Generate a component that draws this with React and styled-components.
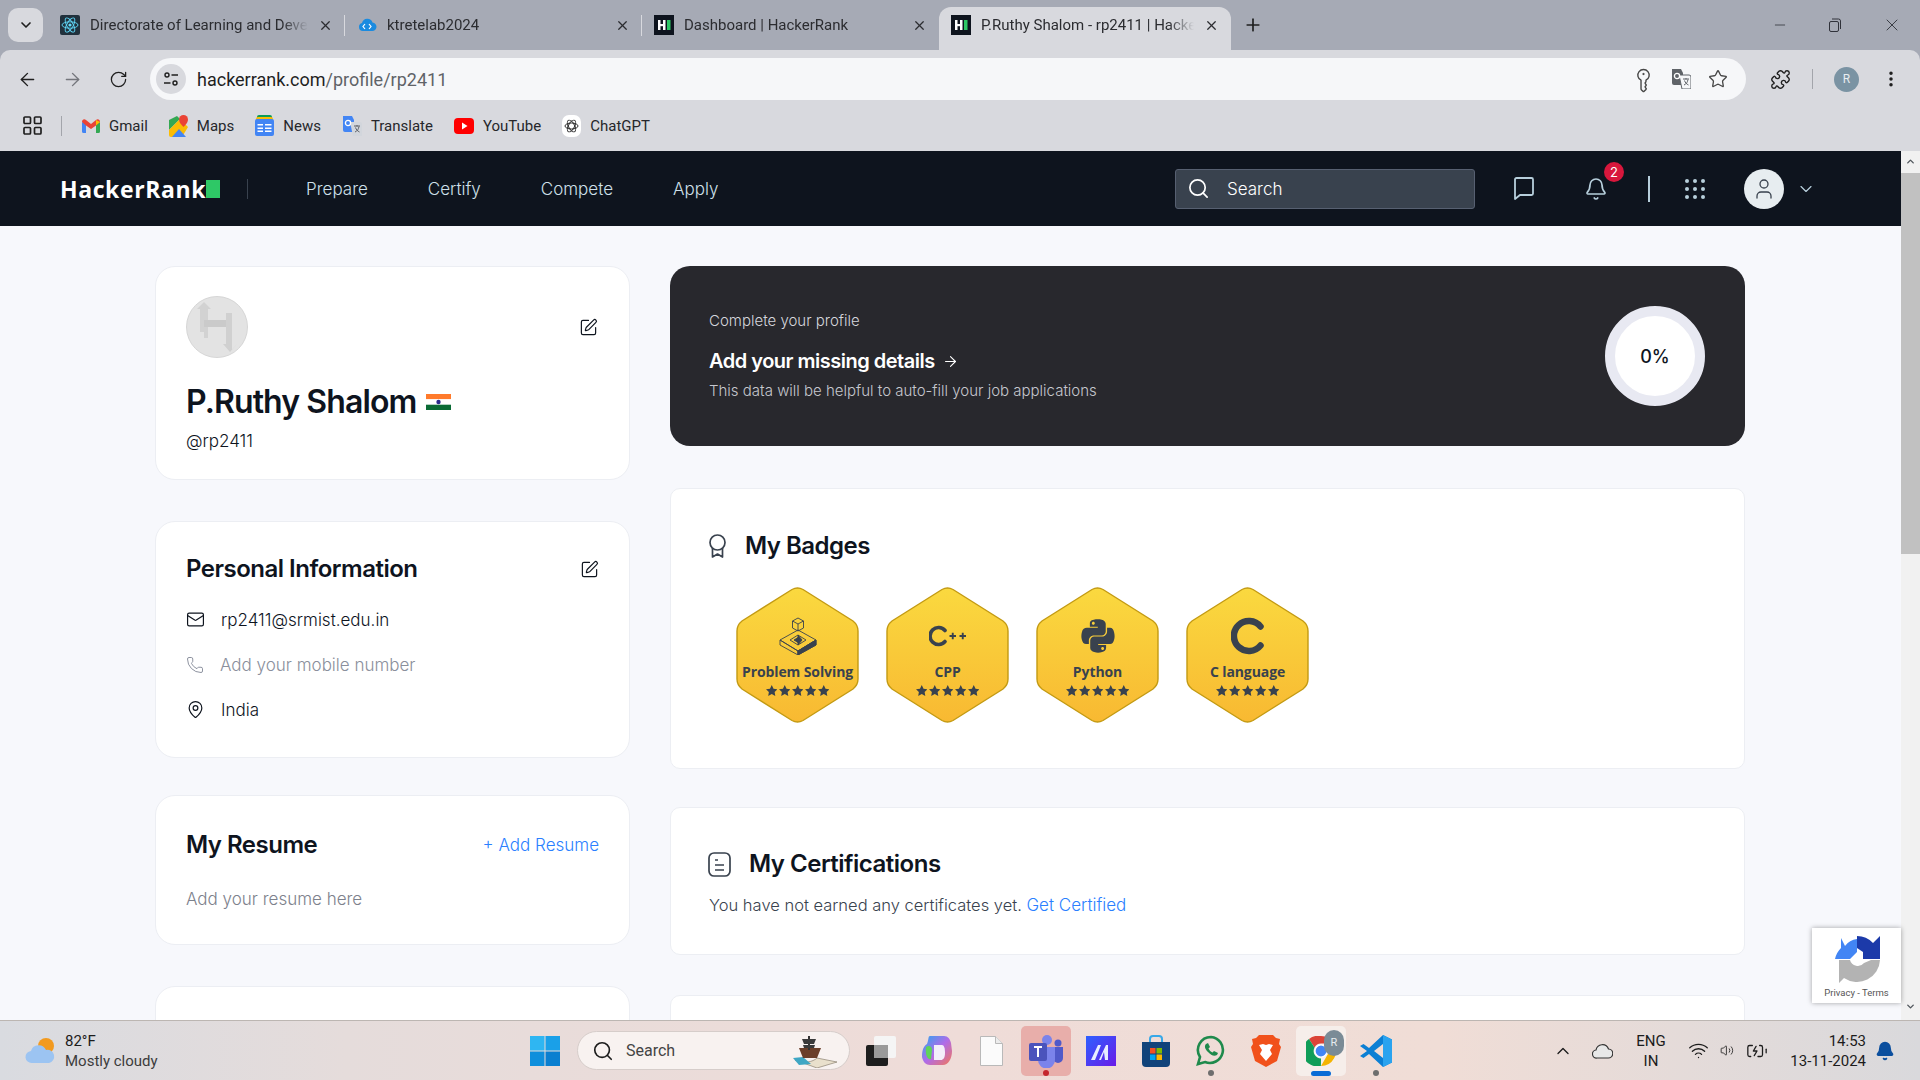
import styled, { createGlobalStyle } from "styled-components";
import {
  ArrowLeft, ArrowRight, RotateCw, KeyRound, Star, Puzzle, EllipsisVertical, Plus, X, Minus,
  ChevronDown, ChevronUp, Search, Bell, User, SquarePen, Mail, Phone, MapPin, Wifi, Volume2, BatteryCharging,
} from "lucide-react";
import { FaPython } from "react-icons/fa";

const GlobalStyle = createGlobalStyle`
  html, body { margin: 0; padding: 0; height: 100%; overflow: hidden; }
  body { font-family: "Inter", "Liberation Sans", sans-serif; background: #f7f8fc; }
  * { box-sizing: border-box; }
`;

const Screen = styled.div`
  width: 1920px;
  height: 1080px;
  display: flex;
  flex-direction: column;
  overflow: hidden;
  position: relative;
`;

/* browser chrome */
const Frame = styled.div`
  background: #a6aab5;
  flex: none;
  font-family: "Roboto", "Liberation Sans", sans-serif;
`;

const TabStrip = styled.div`
  height: 50px;
  display: flex;
  align-items: flex-end;
  padding-left: 8px;
`;

const TabMenu = styled.div`
  width: 35px;
  height: 34px;
  margin: 0 5px 8px 0;
  border-radius: 10px;
  background: #d8d9de;
  display: flex;
  align-items: center;
  justify-content: center;
  color: #1f1f1f;
`;

const Tab = styled.div`
  position: relative;
  width: ${(p) => (p.$active ? "292px" : "297px")};
  height: 43px;
  padding: 0 12px 7px;
  display: flex;
  align-items: center;
  gap: 10px;
  border-radius: 12px 12px 0 0;
  background: ${(p) => (p.$active ? "#d8d9de" : "transparent")};
  color: #2b2c30;
  &::after {
    content: "";
    display: ${(p) => (p.$divider ? "block" : "none")};
    position: absolute;
    right: 0;
    top: 8px;
    height: 21px;
    width: 1.5px;
    background: #d8d9de;
  }
`;

const TabTitle = styled.span`
  flex: 1;
  min-width: 0;
  font-size: 15px;
  white-space: nowrap;
  overflow: hidden;
  -webkit-mask-image: linear-gradient(to right, #000 88%, transparent);
  mask-image: linear-gradient(to right, #000 88%, transparent);
`;

const NewTab = styled.div`
  margin: 0 0 8px 12px;
  height: 34px;
  display: flex;
  align-items: center;
  color: #1f1f1f;
`;

const WindowControls = styled.div`
  margin-left: auto;
  height: 50px;
  display: flex;
  align-items: center;
  padding-right: 18px;
  gap: 39px;
  color: #30323a;
`;

const Toolbar = styled.div`
  height: 50px;
  background: #d8d9de;
  border-radius: 10px 10px 0 0;
  display: flex;
  align-items: center;
  padding: 8px 0 0 16px;
  color: #1f1f1f;
`;

const ToolIcon = styled.div`
  width: 22px;
  display: flex;
  justify-content: center;
  margin-right: ${(p) => p.$mr || 0}px;
  margin-left: ${(p) => p.$ml || 0}px;
  color: ${(p) => p.$color || "inherit"};
`;

const Omnibox = styled.div`
  width: 1596px;
  height: 42px;
  border-radius: 21px;
  background: #f6f7f9;
  display: flex;
  align-items: center;
  padding: 0 18px 0 6px;
`;

const SiteChip = styled.div`
  width: 30px;
  height: 30px;
  border-radius: 50%;
  background: #d8d9de;
  display: flex;
  align-items: center;
  justify-content: center;
  margin-right: 11px;
`;

const Url = styled.div`
  font-size: 18px;
  color: #1f1f1f;
  flex: 1;
  span { color: #5f6368; }
`;

const OmniIcons = styled.div`
  display: flex;
  align-items: center;
  gap: 17px;
  color: #474747;
`;

const Avatar = styled.div`
  width: 25px;
  height: 25px;
  border-radius: 50%;
  background: #7a93a3;
  color: #e8edf0;
  font-size: 12px;
  display: flex;
  align-items: center;
  justify-content: center;
`;

const VRule = styled.div`
  width: 1px;
  height: 20px;
  background: #a3a5ab;
  margin: 0 ${(p) => p.$mx || 0}px;
`;

const Bookmarks = styled.div`
  height: 51px;
  background: #d8d9de;
  display: flex;
  align-items: center;
  padding-left: 23px;
`;

const Bookmark = styled.div`
  display: flex;
  align-items: center;
  gap: 9px;
  font-size: 15px;
  color: #26272b;
  margin-left: ${(p) => p.$ml || 21}px;
`;

/* page */
const Viewport = styled.div`
  flex: 1;
  min-height: 0;
  display: flex;
  position: relative;
`;

const Page = styled.div`
  flex: 1;
  min-width: 0;
  overflow: hidden;
  background: #f7f8fc;
`;

const Scrollbar = styled.div`
  width: 19px;
  background: #f1f1f1;
  display: flex;
  flex-direction: column;
  align-items: center;
  padding-top: 5px;
  color: #50565c;
  position: relative;
`;

const ScrollThumb = styled.div`
  width: 19px;
  height: 381px;
  margin-top: 6px;
  background: #c1c1c1;
`;

const ScrollDown = styled.div`
  margin-top: auto;
  margin-bottom: 4px;
`;

const Nav = styled.nav`
  height: 75px;
  background: #0e141e;
  display: flex;
  align-items: center;
  padding-left: 60px;
`;

const Logo = styled.div`
  display: flex;
  align-items: center;
  font-family: "Open Sans", "Noto Sans", sans-serif;
  font-weight: 700;
  font-size: 23px;
  color: #fff;
  letter-spacing: 0.6px;
  i {
    display: block;
    width: 14px;
    height: 18px;
    background: #2ec866;
    margin-left: 0;
  }
`;

const NavRule = styled.div`
  width: ${(p) => p.$w || 1}px;
  height: ${(p) => p.$h || 20}px;
  background: ${(p) => p.$color || "#39424e"};
  margin-left: ${(p) => p.$ml}px;
`;

const NavLinks = styled.div`
  display: flex;
  gap: 60px;
  margin-left: 58px;
`;

const NavLink = styled.a`
  font-size: 17px;
  font-weight: 300;
  color: #cfe0ea;
`;

const NavSearch = styled.div`
  width: 300px;
  height: 40px;
  margin-left: auto;
  background: #39424e;
  border: 1px solid #576071;
  border-radius: 3px;
  display: flex;
  align-items: center;
  padding-left: 11px;
  gap: 17px;
  color: #fff;
  font-size: 17px;
  font-weight: 300;
`;

const NavIcon = styled.div`
  position: relative;
  width: ${(p) => p.$w || 24}px;
  display: flex;
  justify-content: center;
  margin-left: ${(p) => p.$ml}px;
  color: #b7cfdc;
`;

const NotifBadge = styled.span`
  position: absolute;
  top: -15px;
  right: -16px;
  width: 20px;
  height: 20px;
  border-radius: 50%;
  background: #d8173c;
  color: #fff;
  font-size: 13px;
  display: flex;
  align-items: center;
  justify-content: center;
`;

const UserCircle = styled.div`
  width: 40px;
  height: 40px;
  border-radius: 50%;
  background: #e7edf0;
  color: #39424e;
  display: flex;
  align-items: center;
  justify-content: center;
  margin-left: 37px;
`;

const Columns = styled.main`
  display: grid;
  grid-template-columns: 475px 1075px;
  column-gap: 40px;
  padding: 40px 0 0 155px;
`;

const Column = styled.div`
  display: flex;
  flex-direction: column;
`;

const Card = styled.section`
  background: #fff;
  border: 1px solid #eceef3;
  border-radius: ${(p) => p.$radius || 20}px;
  height: ${(p) => p.$h}px;
  margin-top: ${(p) => p.$mt || 0}px;
  padding: ${(p) => p.$pad || "0 30px"};
  flex: none;
`;

const ProfileTop = styled.div`
  display: flex;
  align-items: center;
  justify-content: space-between;
  padding-right: 1px;
`;

const Name = styled.h1`
  margin: 23px 0 0;
  display: flex;
  align-items: center;
  gap: 10px;
  font-size: 32px;
  line-height: 42px;
  font-weight: 600;
  letter-spacing: -0.9px;
  color: #0e141e;
`;

const Handle = styled.div`
  margin-top: 6px;
  font-size: 17px;
  line-height: 24px;
  font-weight: 300;
  color: #0e141e;
`;

const CardHead = styled.div`
  display: flex;
  align-items: center;
  justify-content: space-between;
  height: ${(p) => p.$h || 30}px;
`;

const CardTitle = styled.h2`
  margin: 0;
  font-size: ${(p) => p.$size || 24}px;
  line-height: 30px;
  font-weight: 600;
  letter-spacing: -0.5px;
  color: #0e141e;
`;

const InfoRow = styled.div`
  display: flex;
  align-items: center;
  gap: 16px;
  height: 45px;
  font-size: 17px;
  font-weight: 300;
  color: ${(p) => (p.$muted ? "#8a8f9c" : "#0e141e")};
`;

const LinkText = styled.a`
  font-size: 17px;
  font-weight: 300;
  color: #2b7fff;
`;

const Muted = styled.div`
  font-size: 17px;
  font-weight: 300;
  color: #7d818c;
  margin-top: 29px;
`;

const Hero = styled.section`
  height: 180px;
  background: #28282d;
  border-radius: 20px;
  padding: 0 40px 0 39px;
  display: flex;
  align-items: center;
  justify-content: space-between;
`;

const HeroKicker = styled.div`
  font-size: 15px;
  font-weight: 300;
  line-height: 20px;
  color: #d5d6dc;
`;

const HeroTitle = styled.div`
  margin-top: 16px;
  display: flex;
  align-items: center;
  gap: 7px;
  font-size: 20px;
  line-height: 28px;
  font-weight: 600;
  letter-spacing: -0.5px;
  color: #fff;
`;

const HeroText = styled.div`
  margin-top: 6px;
  font-size: 15px;
  font-weight: 300;
  line-height: 20px;
  color: #c6c7ce;
`;

const Ring = styled.div`
  width: 100px;
  height: 100px;
  border-radius: 50%;
  background: #fff;
  border: 10px solid #e8e9f2;
  display: flex;
  align-items: center;
  justify-content: center;
  font-size: 18px;
  font-weight: 500;
  color: #0e141e;
`;

const SectionHead = styled.div`
  display: flex;
  align-items: center;
  gap: 18px;
  height: 30px;
`;

const BadgeRow = styled.div`
  display: flex;
  gap: 27px;
  margin: 26px 0 0 28px;
`;

const Badge = styled.div`
  position: relative;
  width: 123px;
  height: 136px;
  display: flex;
  flex-direction: column;
  align-items: center;
  color: #39424e;
`;

const BadgeShape = styled.svg`
  position: absolute;
  inset: 0;
`;

const BadgeIcon = styled.div`
  position: relative;
  height: 38px;
  margin-top: 30px;
  display: flex;
  align-items: center;
  justify-content: center;
`;

const BadgeLabel = styled.div`
  position: relative;
  margin-top: 7px;
  font-family: "Open Sans", "Noto Sans", sans-serif;
  font-size: 14px;
  line-height: 20px;
  font-weight: 700;
  white-space: nowrap;
  letter-spacing: -0.1px;
`;

const Stars = styled.div`
  position: relative;
  margin-top: 3px;
  display: flex;
  gap: 1.5px;
`;

const CertText = styled.p`
  margin: 14px 0 0 1px;
  font-size: 16.5px;
  font-weight: 300;
  color: #39424e;
  line-height: 24px;
`;

const Recaptcha = styled.div`
  position: absolute;
  right: 19px;
  bottom: 17px;
  width: 89px;
  height: 75px;
  background: #fff;
  box-shadow: 0 0 5px rgba(0, 0, 0, 0.35);
  display: flex;
  flex-direction: column;
  align-items: center;
  padding-top: 8px;
  font-family: "Roboto", sans-serif;
  font-size: 9.5px;
  color: #555;
  gap: 4px;
`;

/* taskbar */
const Taskbar = styled.footer`
  height: 60px;
  flex: none;
  border-top: 1px solid #bcb6b2;
  background: linear-gradient(90deg, #d9dbe0 0%, #e5dcdb 18%, #efdcd8 50%, #f0ddd6 75%, #d9d9dc 100%);
  display: flex;
  align-items: center;
  padding: 0 16px 0 25px;
  font-family: "Roboto", "Liberation Sans", sans-serif;
  color: #1c1c1c;
`;

const Weather = styled.div`
  width: 505px;
  display: flex;
  align-items: center;
  gap: 9px;
  font-size: 15px;
  line-height: 20px;
  small { display: block; font-size: 15px; color: #3c3c3c; }
`;

const TaskSearch = styled.div`
  width: 273px;
  height: 39px;
  margin: 0 6px 0 17px;
  border-radius: 20px;
  background: #f8f2f0;
  border: 1px solid #d6cdca;
  display: flex;
  align-items: center;
  padding: 0 8px 0 14px;
  gap: 12px;
  font-size: 16px;
  color: #444;
  svg:last-child { margin-left: auto; }
`;

const TaskIcons = styled.div`
  display: flex;
  gap: 5px;
`;

const TaskSlot = styled.div`
  position: relative;
  width: 50px;
  height: 50px;
  border-radius: 5px;
  background: ${(p) => p.$bg || "transparent"};
  display: flex;
  align-items: center;
  justify-content: center;
`;

const RunDot = styled.span`
  position: absolute;
  bottom: 0;
  left: 50%;
  transform: translateX(-50%);
  width: ${(p) => p.$w || 6}px;
  height: ${(p) => (p.$w ? 5 : 6)}px;
  border-radius: 3px;
  background: ${(p) => p.$color};
`;

const Tray = styled.div`
  margin-left: auto;
  display: flex;
  align-items: center;
`;

const TrayItem = styled.div`
  width: ${(p) => p.$w}px;
  display: flex;
  justify-content: ${(p) => p.$justify || "center"};
  text-align: ${(p) => p.$align || "center"};
  font-size: 15px;
  line-height: 20px;
`;

const iconProps = { strokeWidth: 1.6 };

const HrFavicon = () => (
  <svg width="20" height="20" viewBox="0 0 20 20">
    <rect width="20" height="20" fill="#0e141e" />
    <rect x="4" y="5" width="2.5" height="10" fill="#fff" />
    <rect x="9" y="5" width="2.5" height="10" fill="#fff" />
    <rect x="6" y="9" width="4" height="2.2" fill="#fff" />
    <rect x="13" y="5" width="3.5" height="10" fill="#2ec866" />
  </svg>
);

const ReactFavicon = () => (
  <svg width="20" height="20" viewBox="0 0 20 20">
    <rect width="20" height="20" rx="2" fill="#20303c" />
    <g fill="none" stroke="#61dafb" strokeWidth="0.9">
      <ellipse cx="10" cy="10" rx="8" ry="3.2" />
      <ellipse cx="10" cy="10" rx="8" ry="3.2" transform="rotate(60 10 10)" />
      <ellipse cx="10" cy="10" rx="8" ry="3.2" transform="rotate(120 10 10)" />
    </g>
    <circle cx="10" cy="10" r="1.6" fill="#61dafb" />
  </svg>
);

const CodeFavicon = () => (
  <svg width="20" height="20" viewBox="0 0 20 20">
    <path d="M2 12a4 4 0 0 1 3-4 5.500 5.500 0 0 1 10.500-.5A4 4 0 0 1 15 16H6a4 4 0 0 1-4-4z" fill="#1a8be0" />
    <path d="M8 9l-2 2.500L8 14M12 9l2 2.500-2 2.500" fill="none" stroke="#fff" strokeWidth="1.200" />
  </svg>
);

const GmailIcon = () => (
  <svg width="18" height="14" viewBox="0 0 18 14">
    <path d="M0 3v9.500A1.500 1.500 0 0 0 1.500 14H4V5z" fill="#4285f4" />
    <path d="M14 14h2.500a1.500 1.500 0 0 0 1.500-1.500V3l-4 2z" fill="#34a853" />
    <path d="M0 3c0-2.500 2.300-3.500 4-2l5 4 5-4c1.700-1.500 4-.5 4 2l-4 3.500L9 10 4 6.500z" fill="#ea4335" />
    <path d="M14 1l4 2-4 3.500z" fill="#fbbc04" />
  </svg>
);

const MapsIcon = () => (
  <svg width="19" height="22" viewBox="0 0 19 22">
    <path d="M0 5l8-4 3 3L0 15z" fill="#34a853" />
    <path d="M0 15L11 4l8 8-6 10H2a2 2 0 0 1-2-2z" fill="#fbbc04" />
    <path d="M3 22l7-8 7 8z" fill="#4285f4" />
    <path d="M14.500 0a4.500 4.500 0 0 1 4.500 4.500C19 8 14.500 12 14.500 12S10 8 10 4.500A4.500 4.500 0 0 1 14.500 0z" fill="#ea4335" />
  </svg>
);

const NewsIcon = () => (
  <svg width="19" height="21" viewBox="0 0 19 21">
    <rect x="2" y="0" width="15" height="8" rx="2" fill="#0c9d58" />
    <rect x="1" y="2" width="17" height="6" rx="2" fill="#fbbc04" />
    <rect y="4" width="19" height="17" rx="2" fill="#4285f4" />
    <rect x="2.500" y="9" width="5.500" height="1.500" fill="#fff" />
    <rect x="2.500" y="12.500" width="5.500" height="1.500" fill="#fff" />
    <rect x="2.500" y="15.500" width="5.500" height="1.500" fill="#fff" />
    <rect x="10" y="9" width="6.500" height="1.500" fill="#fff" />
    <rect x="10" y="12.500" width="6.500" height="1.500" fill="#fff" />
    <rect x="10" y="15.500" width="6.500" height="1.500" fill="#fff" />
  </svg>
);

const TranslateIcon = ({ dark }) => (
  <svg width="20" height="20" viewBox="0 0 20 20">
    <path d="M1 0h9l2 4v12H3a2 2 0 0 1-2-2z" fill={dark ? "#5f6368" : "#4285f4"} />
    <path d="M8 6h10a2 2 0 0 1 2 2v12h-9z" fill={dark ? "#f6f7f9" : "#d2d6dc"} stroke={dark ? "#5f6368" : "none"} />
    <circle cx="6" cy="7" r="2.600" fill="none" stroke="#fff" strokeWidth="1.300" />
    <path d="M12 10h6M15 9v1.500M13 16c2.500-1 3.500-3 4-5.500M13.500 11.500c.6 2 2 3.500 4 4.500" fill="none" stroke="#5f6368" strokeWidth="1" />
  </svg>
);

const YoutubeIcon = () => (
  <svg width="20" height="16" viewBox="0 0 20 16">
    <rect width="20" height="16" rx="4" fill="#ff0000" />
    <path d="M8 4.500l5.500 3.500L8 11.500z" fill="#fff" />
  </svg>
);

const ChatGptIcon = () => (
  <svg width="19" height="22" viewBox="0 0 19 22">
    <rect width="19" height="22" rx="7" fill="#fff" />
    <g fill="none" stroke="#303030" strokeWidth="1">
      <ellipse cx="9.500" cy="11" rx="6.500" ry="3" />
      <ellipse cx="9.500" cy="11" rx="6.500" ry="3" transform="rotate(60 9.500 11)" />
      <ellipse cx="9.500" cy="11" rx="6.500" ry="3" transform="rotate(120 9.500 11)" />
    </g>
  </svg>
);

const StarGlyph = () => (
  <svg width="11.500" height="11" viewBox="0 0 24 23">
    <path d="M12 0l3.700 7.600 8.300 1.200-6 5.900 1.400 8.300L12 19l-7.400 4 1.400-8.300-6-5.900 8.300-1.200z" fill="#39424e" />
  </svg>
);

const ProblemIcon = () => (
  <svg width="38" height="38" viewBox="0 0 38 38" fill="none" stroke="#39424e" strokeWidth="0.9">
    <path d="M19 1l5.500 3v7L19 14l-5.500-3V4z" />
    <path d="M13.500 4L19 7l5.500-3M19 7v7" />
    <path d="M1 23l18-10 18 10-18 11z" />
    <path d="M1 23v5l18 10v-4zM19 38l18-10v-5l-18 11z" />
    <path d="M37 23v5l-18 10V34z" fill="#39424e" />
    <path d="M11 23l8-5 8 5-8 5z" />
    <path d="M19 18l4 5-4 5z" fill="#39424e" />
    <path d="M15 23l4-2.500V25.500z" fill="#39424e" />
  </svg>
);

const CppIcon = () => (
  <svg width="38" height="24" viewBox="0 0 38 24" fill="none" stroke="#39424e">
    <path d="M16 6.500A8.500 8.500 0 1 0 16 17.500" strokeWidth="3.600" strokeLinecap="round" />
    <path d="M20.500 12h6.500M23.750 8.700v6.600M30.500 12h6.500M33.750 8.700v6.600" strokeWidth="1.900" />
  </svg>
);

const CIcon = () => (
  <svg width="34" height="38" viewBox="0 0 34 38" fill="none" stroke="#39424e">
    <path d="M29.500 9.500A15 15 0 1 0 29.500 28.500" strokeWidth="6.500" strokeLinecap="round" />
  </svg>
);

const BadgeOutline = () => (
  <BadgeShape width="123" height="136" viewBox="0 0 123 136">
    <defs>
      <linearGradient id="hex" x1="0" y1="0" x2="0" y2="1">
        <stop offset="0" stopColor="#fad93f" />
        <stop offset="1" stopColor="#f8b932" />
      </linearGradient>
    </defs>
    <path
      d="M56 2.500Q61.500 -0.500 67 2.500L117 34Q122 38 122 44L122 92Q122 98 117 102L67 133.500Q61.500 136.500 56 133.500L6 102Q1 98 1 92L1 44Q1 38 6 34Z"
      fill="url(#hex)"
      stroke="#c39a12"
      strokeWidth="1.400"
    />
  </BadgeShape>
);

const badges = [
  { label: "Problem Solving", icon: <ProblemIcon /> },
  { label: "CPP", icon: <CppIcon /> },
  { label: "Python", icon: <FaPython size={38} color="#39424e" /> },
  { label: "C language", icon: <CIcon /> },
];

const RecaptchaLogo = () => (
  <svg width="46" height="47" viewBox="0 0 46 47">
    <path d="M7 2l4 8a17 17 0 0 1 12-7v13l-7 7H1A22 22 0 0 1 7 12z" fill="#4285f4" />
    <path d="M23 0v12l6 4v7h17V0l-7 7a22 22 0 0 0-16-7z" fill="#1c3aa9" />
    <path d="M1 24h15a8 8 0 0 0 14 3l7 -3h9a23 23 0 0 1-36 18l-5 5V24z" fill="#b3b3b3" />
  </svg>
);

const WindowsIcon = () => (
  <svg width="30" height="30" viewBox="0 0 30 30">
    <rect width="14.500" height="14.500" fill="#2fb6f2" />
    <rect x="15.500" width="14.500" height="14.500" fill="#1aa0e8" />
    <rect y="15.500" width="14.500" height="14.500" fill="#0f8fdc" />
    <rect x="15.500" y="15.500" width="14.500" height="14.500" fill="#0a7fd0" />
  </svg>
);

const WeatherIcon = () => (
  <svg width="31" height="31" viewBox="0 0 31 31">
    <circle cx="21" cy="11" r="8" fill="#f29a1f" />
    <path d="M7 28a6 6 0 0 1-1-12 8 8 0 0 1 15-1 6.500 6.500 0 0 1 3 13z" fill="#9cc4f2" />
  </svg>
);

const ShipIcon = () => (
  <svg width="52" height="34" viewBox="0 0 52 34">
    <path d="M6 26c8 4 18 2 22-2l20 4-20 6z" fill="#e9e0cc" stroke="#7a7060" strokeWidth="0.6" />
    <path d="M4 24l10-1 8 7-12 1z" fill="#3fa7c4" />
    <path d="M10 14h22l-4 10H14z" fill="#6b3f2a" />
    <rect x="19" y="2" width="2" height="14" fill="#333" />
    <path d="M13 5h14l-2 5H15zM14 11h12l-1 3H15z" fill="#3a3a3a" />
  </svg>
);

const TaskViewIcon = () => (
  <svg width="30" height="30" viewBox="0 0 30 30">
    <rect x="8" y="0" width="22" height="22" rx="2" fill="#f5f5f5" />
    <rect x="0" y="9" width="22" height="21" rx="2" fill="#1e1e1e" />
    <rect x="8" y="9" width="14" height="13" fill="#9a9a9a" />
  </svg>
);

const CopilotIcon = () => (
  <svg width="31" height="31" viewBox="0 0 31 31">
    <defs>
      <linearGradient id="cop" x1="0" y1="0" x2="1" y2="1">
        <stop offset="0" stopColor="#2aa7f0" />
        <stop offset="0.5" stopColor="#b06be8" />
        <stop offset="1" stopColor="#f2785a" />
      </linearGradient>
    </defs>
    <path d="M9 1h14c4 0 6 3 7 7l1 8c0 8-4 14-9 14H9c-4 0-7-3-8-8 0-8 2-11 5-13 2-5 1-8 3-8z" fill="url(#cop)" />
    <path d="M5 12c3-2 6-1 6 3l-1 9c-3 1-6-3-5-12z" fill="#5fd35a" />
    <path d="M13 10h8c2 0 3 3 3 8s-2 7-4 7h-7z" fill="#f4eefa" />
  </svg>
);

const FileIcon = () => (
  <svg width="23" height="30" viewBox="0 0 23 30">
    <path d="M.5.500h15l7 7v22H.5z" fill="#fbfbfb" stroke="#b9b9b9" />
    <path d="M15.500.500v7h7" fill="#ececec" stroke="#b9b9b9" />
  </svg>
);

const TeamsIcon = () => (
  <svg width="34" height="34" viewBox="0 0 34 34">
    <circle cx="18" cy="6" r="5" fill="#7b83eb" />
    <circle cx="29" cy="9" r="3.500" fill="#5059c9" />
    <path d="M23 13h11v11a5 5 0 0 1-10 0z" fill="#5059c9" />
    <path d="M9 13h17v13a8 8 0 0 1-17 0z" fill="#7b83eb" />
    <rect x="0" y="9" width="18" height="18" rx="2" fill="#4b53bc" />
    <path d="M5 13h8M9 13v10" stroke="#fff" strokeWidth="2" />
  </svg>
);

const AltIcon = () => (
  <svg width="30" height="30" viewBox="0 0 30 30">
    <defs>
      <linearGradient id="alt" x1="0" y1="0" x2="1" y2="1">
        <stop offset="0" stopColor="#2d60ff" />
        <stop offset="1" stopColor="#6a1be8" />
      </linearGradient>
    </defs>
    <rect width="30" height="30" fill="url(#alt)" />
    <path d="M5 24l7-15h3L9 24zM13 24l7-15h2v15h-3l-1-8-3 8z" fill="#e8eeff" />
  </svg>
);

const StoreIcon = () => (
  <svg width="30" height="32" viewBox="0 0 30 32">
    <path d="M9 8V4a3 3 0 0 1 3-3h6a3 3 0 0 1 3 3v4" fill="none" stroke="#38a8e8" strokeWidth="2" />
    <path d="M1 7h28v21a4 4 0 0 1-4 4H5a4 4 0 0 1-4-4z" fill="#11437a" />
    <rect x="9" y="13" width="5.500" height="5.500" fill="#f25022" />
    <rect x="15.500" y="13" width="5.500" height="5.500" fill="#7fba00" />
    <rect x="9" y="19.500" width="5.500" height="5.500" fill="#00a4ef" />
    <rect x="15.500" y="19.500" width="5.500" height="5.500" fill="#ffb900" />
  </svg>
);

const WhatsappIcon = () => (
  <svg width="30" height="31" viewBox="0 0 30 31">
    <path d="M15 2a13 13 0 0 0-11 20l-2 7 7-2A13 13 0 1 0 15 2z" fill="none" stroke="#1f8a4c" strokeWidth="2.600" />
    <path d="M10 9c-2 2-1 5 2 8s6 5 9 3l1-2-4-2-1.500 1.500c-2-1-3-2-4-4L14 12l-2-4z" fill="#1f8a4c" />
  </svg>
);

const BraveIcon = () => (
  <svg width="30" height="33" viewBox="0 0 30 33">
    <path d="M8 1h14l3 3 4 1-1 5 2 3-4 14-11 6-11-6L0 13l2-3-1-5 4-1z" fill="#f1511b" />
    <path d="M8 11l4-1 3 1 3-1 4 1-3 5 2 4-6 7-6-7 2-4z" fill="#fff" />
  </svg>
);

const ChromeIcon = () => (
  <svg width="30" height="30" viewBox="0 0 30 30">
    <path d="M15 0a15 15 0 0 1 13 7.500H15a7.500 7.500 0 0 0-6.500 4L3 3A15 15 0 0 1 15 0z" fill="#db4437" />
    <path d="M28 7.500A15 15 0 0 1 15 30l6.500-11.200a7.500 7.500 0 0 0 0-11.300z" fill="#f4b400" />
    <path d="M3 3l5.500 8.500a7.500 7.500 0 0 0 6.500 11l-.1 7.500A15 15 0 0 1 3 3z" fill="#0f9d58" />
    <circle cx="15" cy="15" r="6" fill="#4285f4" stroke="#fff" strokeWidth="1.200" />
  </svg>
);

const ChromeProfile = styled.span`
  position: absolute;
  top: 4px;
  right: 2px;
  width: 20px;
  height: 26px;
  border-radius: 10px;
  background: #7a8b96;
  color: #e8edf0;
  font-size: 11px;
  display: flex;
  align-items: center;
  justify-content: center;
`;

const VsCodeIcon = () => (
  <svg width="32" height="32" viewBox="0 0 32 32">
    <path d="M23 0l9 4.500v23L23 32 9 19l-5.500 4L0 21l7-5-7-5 3.500-2L9 13z" fill="#0b7fd4" />
    <path d="M23 0l9 4.500v23L23 32z" fill="#2aa3ef" />
    <path d="M23 9l-9 7 9 7z" fill="#f0ddd6" />
  </svg>
);

const EditIcon = () => <SquarePen size={19} strokeWidth={1.5} color="#0e141e" />;

const DefaultAvatar = () => (
  <svg width="62" height="62" viewBox="0 0 62 62">
    <circle cx="31" cy="31" r="30.500" fill="#e3e3e3" stroke="#d6d6d6" />
    <path d="M18 6l7 7h-3v29h-4z M18 6l-7 7h3v23h4z" fill="#d2d2d2" />
    <path d="M18 24h22v7H18z" fill="#cacaca" />
    <path d="M40 17h6v37l5-6-7 8-7-8 3 0z" fill="#d0d0d0" />
  </svg>
);

const Flag = () => (
  <svg width="25" height="16" viewBox="0 0 25 16">
    <rect width="25" height="5.300" fill="#ff7a2b" />
    <rect y="5.300" width="25" height="5.400" fill="#fff" />
    <rect y="10.700" width="25" height="5.300" fill="#0b6b35" />
    <circle cx="12.500" cy="8" r="2.200" fill="#2a2a8c" />
  </svg>
);

const App = () => {
  return (
    <Screen>
      <GlobalStyle />
      <Frame>
        <TabStrip>
          <TabMenu><ChevronDown size={16} strokeWidth={2.5} /></TabMenu>
          <Tab $divider>
            <ReactFavicon />
            <TabTitle>Directorate of Learning and Development</TabTitle>
            <X size={15} />
          </Tab>
          <Tab $divider>
            <CodeFavicon />
            <TabTitle>ktretelab2024</TabTitle>
            <X size={15} />
          </Tab>
          <Tab>
            <HrFavicon />
            <TabTitle>Dashboard | HackerRank</TabTitle>
            <X size={15} />
          </Tab>
          <Tab $active>
            <HrFavicon />
            <TabTitle>P.Ruthy Shalom - rp2411 | HackerRank</TabTitle>
            <X size={15} />
          </Tab>
          <NewTab><Plus size={20} strokeWidth={2} /></NewTab>
          <WindowControls>
            <Minus size={16} strokeWidth={1.2} />
            <svg width="16" height="16" viewBox="0 0 16 16" fill="none" stroke="currentColor">
              <rect x="2.500" y="4.500" width="9" height="10" rx="1.500" />
              <path d="M5 2h6.500a2 2 0 0 1 2 2v8" />
            </svg>
            <X size={20} strokeWidth={1.1} />
          </WindowControls>
        </TabStrip>
        <Toolbar>
          <ToolIcon><ArrowLeft size={21} {...iconProps} /></ToolIcon>
          <ToolIcon $ml={23} $color="#74767c"><ArrowRight size={21} {...iconProps} /></ToolIcon>
          <ToolIcon $ml={24} $mr={21}><RotateCw size={19} {...iconProps} /></ToolIcon>
          <Omnibox>
            <SiteChip>
              <svg width="16" height="16" viewBox="0 0 16 16" fill="none" stroke="#1f1f1f" strokeWidth="1.400">
                <circle cx="4" cy="4" r="2" />
                <path d="M8.500 4H15M1 12h6.500" />
                <circle cx="12" cy="12" r="2" />
              </svg>
            </SiteChip>
            <Url>hackerrank.com<span>/profile/rp2411</span></Url>
            <OmniIcons>
              <KeyRound size={21} {...iconProps} style={{ transform: "rotate(-45deg)" }} />
              <TranslateIcon dark />
              <Star size={20} {...iconProps} />
            </OmniIcons>
          </Omnibox>
          <ToolIcon $ml={23}><Puzzle size={21} {...iconProps} /></ToolIcon>
          <VRule $mx={21} />
          <Avatar>R</Avatar>
          <ToolIcon $ml={21}><EllipsisVertical size={20} strokeWidth={2.2} /></ToolIcon>
        </Toolbar>
        <Bookmarks>
          <svg width="19" height="19" viewBox="0 0 19 19" fill="none" stroke="#1f1f1f" strokeWidth="1.700">
            <rect x="1" y="1" width="6.500" height="6.500" rx="1" />
            <rect x="11.500" y="1" width="6.500" height="6.500" rx="1" />
            <rect x="1" y="11.500" width="6.500" height="6.500" rx="1" />
            <rect x="11.500" y="11.500" width="6.500" height="6.500" rx="1" />
          </svg>
          <VRule $mx={19} />
          <Bookmark $ml={1}><GmailIcon />Gmail</Bookmark>
          <Bookmark><MapsIcon />Maps</Bookmark>
          <Bookmark><NewsIcon />News</Bookmark>
          <Bookmark><TranslateIcon />Translate</Bookmark>
          <Bookmark><YoutubeIcon />YouTube</Bookmark>
          <Bookmark><ChatGptIcon />ChatGPT</Bookmark>
        </Bookmarks>
      </Frame>

      <Viewport>
        <Page>
          <Nav>
            <Logo>HackerRank<i /></Logo>
            <NavRule $ml={27} />
            <NavLinks>
              <NavLink>Prepare</NavLink>
              <NavLink>Certify</NavLink>
              <NavLink>Compete</NavLink>
              <NavLink>Apply</NavLink>
            </NavLinks>
            <NavSearch><Search size={23} strokeWidth={1.8} />Search</NavSearch>
            <NavIcon $ml={37}>
              <svg width="24" height="25" viewBox="0 0 24 25" fill="none" stroke="currentColor" strokeWidth="1.800">
                <path d="M3 3.500A1.500 1.500 0 0 1 4.500 2h15A1.500 1.500 0 0 1 21 3.500v14a1.500 1.500 0 0 1-1.500 1.500H8l-5 4z" strokeLinejoin="round" />
              </svg>
            </NavIcon>
            <NavIcon $ml={48}>
              <Bell size={24} strokeWidth={1.7} />
              <NotifBadge>2</NotifBadge>
            </NavIcon>
            <NavRule $ml={40} $h={26} $w={2} $color="#b7cfdc" />
            <NavIcon $ml={33}>
              <svg width="22" height="22" viewBox="0 0 22 22" fill="currentColor">
                {[3, 11, 19].flatMap((cy) => [3, 11, 19].map((cx) => <circle key={`${cx}-${cy}`} cx={cx} cy={cy} r="2" />))}
              </svg>
            </NavIcon>
            <UserCircle><User size={24} strokeWidth={1.3} /></UserCircle>
            <NavIcon $ml={12} $w={20}><ChevronDown size={20} strokeWidth={1.4} /></NavIcon>
            <NavIcon $ml={61} $w={0} />
          </Nav>
          <Columns>
            <Column>
              <Card $h={214} $pad="29px 30px 0">
                <ProfileTop>
                  <DefaultAvatar />
                  <EditIcon />
                </ProfileTop>
                <Name>P.Ruthy Shalom <Flag /></Name>
                <Handle>@rp2411</Handle>
              </Card>
              <Card $h={237} $mt={41} $pad="32px 30px 0">
                <CardHead>
                  <CardTitle>Personal Information</CardTitle>
                  <EditIcon />
                </CardHead>
                <div style={{ height: 13 }} />
                <InfoRow>
                  <Mail size={19} strokeWidth={1.5} />rp2411@srmist.edu.in
                </InfoRow>
                <InfoRow $muted>
                  <Phone size={18} strokeWidth={1.3} />Add your mobile number
                </InfoRow>
                <InfoRow>
                  <MapPin size={19} strokeWidth={1.5} />India
                </InfoRow>
              </Card>
              <Card $h={150} $mt={37} $pad="34px 30px 0">
                <CardHead>
                  <CardTitle>My Resume</CardTitle>
                  <LinkText>+ Add Resume</LinkText>
                </CardHead>
                <Muted>Add your resume here</Muted>
              </Card>
              <Card $h={300} $mt={41} />
            </Column>
            <Column>
              <Hero>
                <div>
                  <HeroKicker>Complete your profile</HeroKicker>
                  <HeroTitle>
                    Add your missing details
                    <ArrowRight size={17} strokeWidth={1.5} />
                  </HeroTitle>
                  <HeroText>This data will be helpful to auto-fill your job applications</HeroText>
                </div>
                <Ring>0%</Ring>
              </Hero>
              <Card $h={281} $mt={42} $radius={10} $pad="42px 37px 0">
                <SectionHead>
                  <svg width="19" height="24" viewBox="0 0 19 24" fill="none" stroke="#39424e" strokeWidth="1.700">
                    <circle cx="9.500" cy="8.500" r="7.500" />
                    <path d="M4.500 14v9l5-3 5 3v-9" strokeLinejoin="round" />
                  </svg>
                  <CardTitle>My Badges</CardTitle>
                </SectionHead>
                <BadgeRow>
                  {badges.map((b) => (
                    <Badge key={b.label}>
                      <BadgeOutline />
                      <BadgeIcon>{b.icon}</BadgeIcon>
                      <BadgeLabel>{b.label}</BadgeLabel>
                      <Stars>{[0, 1, 2, 3, 4].map((i) => <StarGlyph key={i} />)}</Stars>
                    </Badge>
                  ))}
                </BadgeRow>
              </Card>
              <Card $h={148} $mt={38} $radius={10} $pad="41px 37px 0">
                <SectionHead>
                  <svg width="23" height="25" viewBox="0 0 23 25" fill="none" stroke="#39424e" strokeWidth="1.700">
                    <rect x="1" y="1" width="21" height="23" rx="5" />
                    <path d="M7 8h3M7 13h9M7 18h9" />
                  </svg>
                  <CardTitle>My Certifications</CardTitle>
                </SectionHead>
                <CertText>
                  You have not earned any certificates yet. <LinkText>Get Certified</LinkText>
                </CertText>
              </Card>
              <Card $h={300} $mt={40} $radius={10} />
            </Column>
          </Columns>
        </Page>
        <Scrollbar>
          <ChevronUp size={11} strokeWidth={3} />
          <ScrollThumb />
          <ScrollDown><ChevronDown size={11} strokeWidth={3} /></ScrollDown>
        </Scrollbar>
        <Recaptcha>
          <RecaptchaLogo />
          <span>Privacy - Terms</span>
        </Recaptcha>
      </Viewport>

      <Taskbar>
        <Weather>
          <WeatherIcon />
          <div>
            82°F
            <small>Mostly cloudy</small>
          </div>
        </Weather>
        <WindowsIcon />
        <TaskSearch>
          <Search size={22} strokeWidth={1.8} color="#1c1c1c" />
          Search
          <ShipIcon />
        </TaskSearch>
        <TaskIcons>
          <TaskSlot><TaskViewIcon /></TaskSlot>
          <TaskSlot><CopilotIcon /></TaskSlot>
          <TaskSlot><FileIcon /></TaskSlot>
          <TaskSlot $bg="#e8aeaa"><TeamsIcon /><RunDot $color="#c4262e" /></TaskSlot>
          <TaskSlot><AltIcon /></TaskSlot>
          <TaskSlot><StoreIcon /></TaskSlot>
          <TaskSlot><WhatsappIcon /><RunDot $color="#6e6e6e" /></TaskSlot>
          <TaskSlot><BraveIcon /></TaskSlot>
          <TaskSlot $bg="#f6eeea">
            <ChromeIcon />
            <ChromeProfile>R</ChromeProfile>
            <RunDot $color="#0a6cd6" $w={20} />
          </TaskSlot>
          <TaskSlot><VsCodeIcon /><RunDot $color="#6e6e6e" /></TaskSlot>
        </TaskIcons>
        <Tray>
          <TrayItem $w={30}><ChevronUp size={20} strokeWidth={1.6} /></TrayItem>
          <TrayItem $w={48}>
            <svg width="21" height="17" viewBox="0 0 21 17">
              <path d="M5 16a4 4 0 0 1-1-8 6.500 6.500 0 0 1 12.500-1A4.500 4.500 0 0 1 16 16z" fill="#e8e8e8" stroke="#333" strokeWidth="1.200" />
            </svg>
          </TrayItem>
          <TrayItem $w={50}>ENG<br />IN</TrayItem>
          <TrayItem $w={44}><Wifi size={21} strokeWidth={1.5} /></TrayItem>
          <TrayItem $w={14}><Volume2 size={21} strokeWidth={1.4} /></TrayItem>
          <TrayItem $w={46}><BatteryCharging size={22} strokeWidth={1.4} /></TrayItem>
          <TrayItem $w={86} $align="right" $justify="flex-end"><div>14:53<br />13-11-2024</div></TrayItem>
          <TrayItem $w={38}><Bell size={20} fill="#0b4f9e" color="#0b4f9e" /></TrayItem>
        </Tray>
      </Taskbar>
    </Screen>
  );
};

export default App;
